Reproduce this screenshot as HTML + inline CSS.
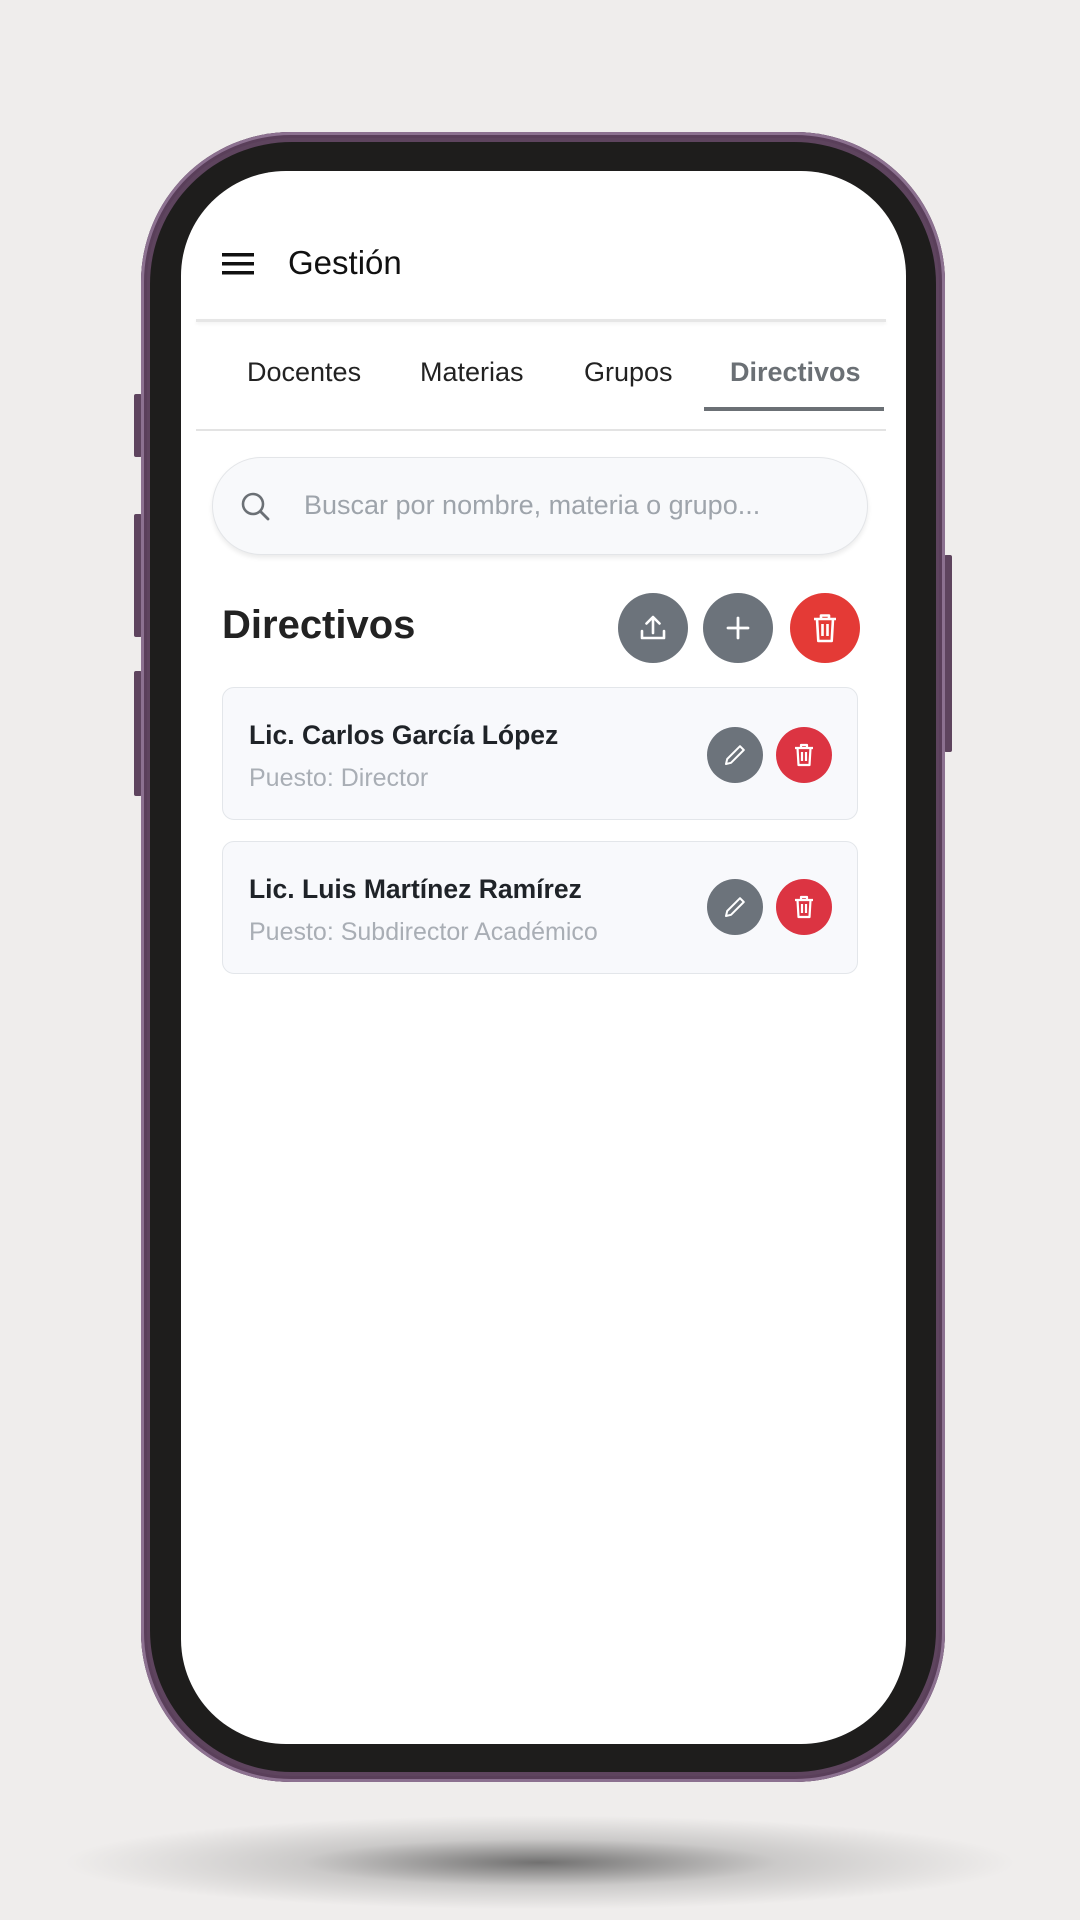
<!DOCTYPE html>
<html><head><meta charset="utf-8"><style>
*{margin:0;padding:0;box-sizing:border-box}
body{width:1080px;height:1920px;background:#efedec;position:relative;overflow:hidden;font-family:"Liberation Sans",Roboto,sans-serif}
.abs{position:absolute}
.shadow{left:60px;top:1815px;width:960px;height:95px;border-radius:50%;background:radial-gradient(ellipse at center,rgba(60,60,60,.7) 0%,rgba(120,120,120,.3) 35%,rgba(239,237,236,0) 70%)}
.frame{left:141px;top:132px;width:804px;height:1650px;border-radius:150px;background:#5e445e;box-shadow:inset 0 0 0 3px #8c7190,inset 0 0 0 6px #5a3f5a}
.bezel{left:150px;top:142px;width:786px;height:1630px;border-radius:142px;background:#1e1d1c}
.screen{left:181px;top:171px;width:725px;height:1573px;border-radius:105px;background:#fff;overflow:hidden}
.btn{background:#5e445e;border-radius:2px}
.t{position:absolute;white-space:nowrap}
.circ{position:absolute;border-radius:50%;display:flex;align-items:center;justify-content:center}
.card{position:absolute;left:41px;width:636px;height:133px;background:#f8f9fc;border:1.5px solid #e3e6ea;border-radius:12px}
</style></head><body>
<div class="abs shadow"></div>
<div class="abs btn" style="left:134px;top:394px;width:8px;height:63px"></div>
<div class="abs btn" style="left:134px;top:514px;width:8px;height:123px"></div>
<div class="abs btn" style="left:134px;top:671px;width:8px;height:125px"></div>
<div class="abs btn" style="left:944px;top:555px;width:8px;height:197px"></div>
<div class="abs frame"></div>
<div class="abs bezel"></div>
<div class="abs screen">
  <svg class="abs" style="left:40px;top:80px" width="34" height="26" viewBox="0 0 34 26"><rect x="1" y="2" width="32" height="3.5" fill="#111"/><rect x="1" y="11" width="32" height="3.5" fill="#111"/><rect x="1" y="20" width="32" height="3.5" fill="#111"/></svg>
  <div class="t" style="left:107px;top:73px;font-size:33px;color:#111">Gestión</div>
  <div class="abs" style="left:15px;top:148px;width:690px;height:3px;background:#e6e6e6;box-shadow:0 2px 3px rgba(0,0,0,.06)"></div>
  <div class="t" style="left:66px;top:186px;font-size:27px;color:#222">Docentes</div>
  <div class="t" style="left:239px;top:186px;font-size:27px;color:#222">Materias</div>
  <div class="t" style="left:403px;top:186px;font-size:27px;color:#222">Grupos</div>
  <div class="t" style="left:549px;top:186px;font-size:27px;color:#6b7075;font-weight:bold">Directivos</div>
  <div class="abs" style="left:523px;top:236px;width:180px;height:4px;background:#6b7075"></div>
  <div class="abs" style="left:15px;top:258px;width:690px;height:2px;background:#e3e3e3"></div>
  <div class="abs" style="left:31px;top:286px;width:656px;height:98px;border-radius:49px;background:#f8f9fb;border:1.5px solid #e3e5e8;box-shadow:0 3px 5px rgba(0,0,0,.08)"></div>
  <svg class="abs" style="left:59px;top:320px" width="32" height="32" viewBox="0 0 32 32"><circle cx="13" cy="13" r="10" fill="none" stroke="#6b7075" stroke-width="2.6"/><line x1="20.5" y1="20.5" x2="28" y2="28" stroke="#6b7075" stroke-width="2.8" stroke-linecap="round"/></svg>
  <div class="t" style="left:123px;top:319px;font-size:27px;color:#9ea4ab">Buscar por nombre, materia o grupo...</div>
  <div class="t" style="left:41px;top:432px;font-size:40px;font-weight:bold;color:#222">Directivos</div>
  <div class="circ" style="left:437px;top:422px;width:70px;height:70px;background:#6c737b">
    <svg width="32" height="32" viewBox="0 0 32 32" fill="none" stroke="#fff" stroke-width="2.6" stroke-linecap="round" stroke-linejoin="round"><path d="M16 21V5M9.5 11.5L16 5l6.5 6.5M5 19v7h22v-7"/></svg>
  </div>
  <div class="circ" style="left:522px;top:422px;width:70px;height:70px;background:#6c737b">
    <svg width="30" height="30" viewBox="0 0 30 30" stroke="#fff" stroke-width="2.8" stroke-linecap="round"><path d="M15 5v20M5 15h20"/></svg>
  </div>
  <div class="circ" style="left:609px;top:422px;width:70px;height:70px;background:#e43a36">
    <svg width="30" height="32" viewBox="0 0 30 32" fill="none" stroke="#fff" stroke-width="2.6" stroke-linejoin="round"><path d="M4 7h22M11 7V3.5h8V7M7 7l1.3 22h13.4L23 7M12.5 12v12M17.5 12v12"/></svg>
  </div>
  <div class="card" style="top:516px"></div>
  <div class="t" style="left:68px;top:549px;font-size:26.5px;font-weight:bold;color:#1f2328">Lic. Carlos García López</div>
  <div class="t" style="left:68px;top:593px;font-size:25px;color:#a9aeb5">Puesto: Director</div>
  <div class="card" style="top:670px"></div>
  <div class="t" style="left:68px;top:703px;font-size:26.5px;font-weight:bold;color:#1f2328">Lic. Luis Martínez Ramírez</div>
  <div class="t" style="left:68px;top:747px;font-size:25px;color:#a9aeb5">Puesto: Subdirector Académico</div>
  <div class="circ" style="left:526px;top:556px;width:56px;height:56px;background:#6c737b"><svg width="26" height="26" viewBox="0 0 26 26" fill="none" stroke="#fff" stroke-width="2" stroke-linejoin="round"><path d="M4 22l1.2-5L18 4.2l3.8 3.8L9 20.8z"/></svg></div>
  <div class="circ" style="left:595px;top:556px;width:56px;height:56px;background:#dc3442"><svg width="24" height="26" viewBox="0 0 24 26" fill="none" stroke="#fff" stroke-width="2.2" stroke-linejoin="round"><path d="M3 6h18M9 6V3h6v3M5.5 6l1 17h11l1-17M10 10v9M14 10v9"/></svg></div>
  <div class="circ" style="left:526px;top:708px;width:56px;height:56px;background:#6c737b"><svg width="26" height="26" viewBox="0 0 26 26" fill="none" stroke="#fff" stroke-width="2" stroke-linejoin="round"><path d="M4 22l1.2-5L18 4.2l3.8 3.8L9 20.8z"/></svg></div>
  <div class="circ" style="left:595px;top:708px;width:56px;height:56px;background:#dc3442"><svg width="24" height="26" viewBox="0 0 24 26" fill="none" stroke="#fff" stroke-width="2.2" stroke-linejoin="round"><path d="M3 6h18M9 6V3h6v3M5.5 6l1 17h11l1-17M10 10v9M14 10v9"/></svg></div>
</div>
</body></html>
